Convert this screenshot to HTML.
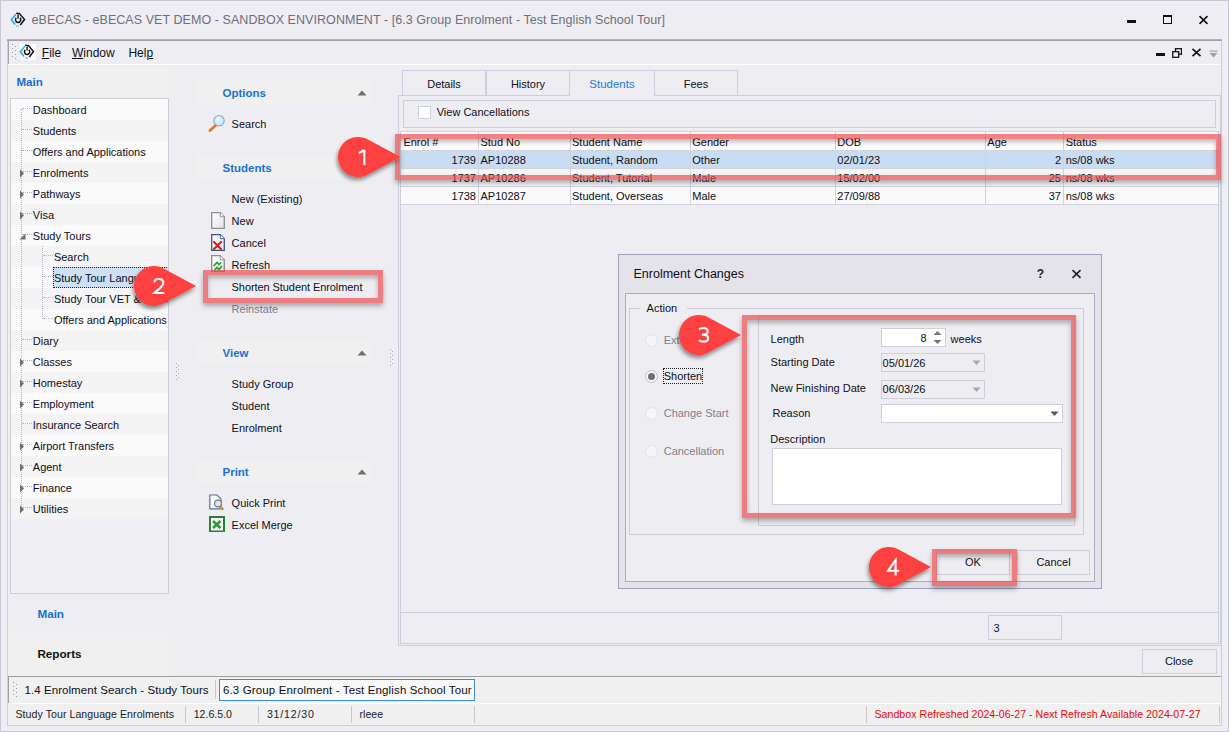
<!DOCTYPE html>
<html><head><meta charset="utf-8"><style>
html,body{margin:0;padding:0;}
body{width:1229px;height:732px;position:relative;overflow:hidden;font-family:"Liberation Sans",sans-serif;background:#eeeef2;}
body div{position:absolute;}
.t{white-space:nowrap;}
</style></head><body>
<div style="left:0px;top:0px;width:1229px;height:732px;background:#eeeef2;"></div>
<div style="left:0px;top:0px;width:1229px;height:1px;background:#c8c8d6;"></div>
<div style="left:0px;top:0px;width:1px;height:732px;background:#c8c8d6;"></div>
<div style="left:1228px;top:0px;width:1px;height:732px;background:#c8c8d6;"></div>
<div style="left:0px;top:731px;width:1229px;height:1px;background:#c8c8d6;"></div>
<svg style="position:absolute;left:8px;top:10px" width="22" height="20" viewBox="0 0 22 20"><path d="M7.9 4.1 L3.3 9.8 L7.1 14.5" fill="none" stroke="#1fa8ec" stroke-width="1.5"/><path d="M8 15.9 L11 16.2" stroke="#6cc8f4" stroke-width="1.3"/><path d="M8.2 3.3 L11.5 3.6 L16.5 9.5 L12.3 15" fill="none" stroke="#111" stroke-width="1.5"/><path d="M8.3 7.9 A2.6 2.6 0 1 0 11.9 7.9" fill="none" stroke="#111" stroke-width="1.5"/><path d="M10.1 4.5 L10.1 8.6" stroke="#111" stroke-width="1.4"/></svg>
<div class="t" style="left:31.5px;top:10.5px;font-size:12.5px;line-height:18px;color:#6e6e7c;font-weight:normal;letter-spacing:0.06px;">eBECAS - eBECAS VET DEMO - SANDBOX ENVIRONMENT - [6.3 Group Enrolment - Test English School Tour]</div>
<div style="left:1127px;top:20px;width:9px;height:3px;background:#111;"></div>
<div style="left:1163px;top:15px;width:9px;height:9px;border:1.2px solid #111;border-top-width:2px;box-sizing:border-box;"></div>
<svg style="position:absolute;left:1198px;top:15px" width="11" height="10" viewBox="0 0 11 10"><path d="M1.5 1.2 L9.5 8.8 M9.5 1.2 L1.5 8.8" stroke="#111" stroke-width="1.6"/></svg>
<div style="left:7px;top:40px;width:1px;height:686px;background:#cfcfdb;"></div>
<div style="left:1221px;top:40px;width:1px;height:686px;background:#cfcfdb;"></div>
<div style="left:7px;top:725px;width:1215px;height:1px;background:#cfcfdb;"></div>
<div style="left:8px;top:40px;width:1213px;height:24px;background:#eeeef2;"></div>
<div style="left:7px;top:39px;width:1215px;height:1px;background:#b4b4be;"></div>
<div style="left:7px;top:40px;width:1215px;height:1px;background:#a0a0aa;"></div>
<div style="left:8px;top:40px;width:1px;height:24px;background:#a4a4ae;"></div>
<div style="left:8px;top:64px;width:1213px;height:1px;background:#ffffff;"></div>
<svg style="position:absolute;left:11px;top:43px" width="7" height="18"><rect x="1" y="1" width="1" height="1" fill="#a0a0a0"/><rect x="4" y="3" width="1" height="1" fill="#a0a0a0"/><rect x="1" y="5" width="1" height="1" fill="#a0a0a0"/><rect x="4" y="7" width="1" height="1" fill="#a0a0a0"/><rect x="1" y="9" width="1" height="1" fill="#a0a0a0"/><rect x="4" y="11" width="1" height="1" fill="#a0a0a0"/><rect x="1" y="13" width="1" height="1" fill="#a0a0a0"/><rect x="4" y="15" width="1" height="1" fill="#a0a0a0"/></svg>
<div style="left:20px;top:44px;width:16px;height:16px;background:#fff;"></div>
<svg style="position:absolute;left:17px;top:42px" width="22" height="20" viewBox="0 0 22 20"><path d="M7.9 4.1 L3.3 9.8 L7.1 14.5" fill="none" stroke="#1fa8ec" stroke-width="1.5"/><path d="M8 15.9 L11 16.2" stroke="#6cc8f4" stroke-width="1.3"/><path d="M8.2 3.3 L11.5 3.6 L16.5 9.5 L12.3 15" fill="none" stroke="#111" stroke-width="1.5"/><path d="M8.3 7.9 A2.6 2.6 0 1 0 11.9 7.9" fill="none" stroke="#111" stroke-width="1.5"/><path d="M10.1 4.5 L10.1 8.6" stroke="#111" stroke-width="1.4"/></svg>
<div class="t" style="left:41.8px;top:44.8px;font-size:12px;line-height:16px;color:#0e0e18;font-weight:normal;"><u>F</u>ile</div>
<div class="t" style="left:72px;top:44.8px;font-size:12px;line-height:16px;color:#0e0e18;font-weight:normal;"><u>W</u>indow</div>
<div class="t" style="left:128.4px;top:44.8px;font-size:12px;line-height:16px;color:#0e0e18;font-weight:normal;">Hel<u>p</u></div>
<div style="left:1156px;top:53px;width:9px;height:3px;background:#111;"></div>
<svg style="position:absolute;left:1172px;top:48px" width="10" height="10" viewBox="0 0 10 10"><rect x="3.5" y="0.7" width="6" height="5.5" fill="none" stroke="#111" stroke-width="1.3"/><rect x="0.7" y="3.7" width="6" height="5.6" fill="#eeeef2" stroke="#111" stroke-width="1.3"/></svg>
<svg style="position:absolute;left:1191px;top:48px" width="11" height="9" viewBox="0 0 11 9"><path d="M1.5 0.8 L9.5 8.2 M9.5 0.8 L1.5 8.2" stroke="#111" stroke-width="1.6"/></svg>
<svg style="position:absolute;left:1209px;top:50px" width="9" height="8" viewBox="0 0 9 8"><rect x="0.5" y="0.5" width="8" height="1.2" fill="#a0a0a0"/><path d="M0.5 3 L8.5 3 L4.5 7.5 Z" fill="#a0a0a0"/></svg>
<div style="left:8px;top:65px;width:161px;height:568px;background:#f0f0f0;"></div>
<div style="left:8px;top:593px;width:161px;height:40px;background:#eeeef2;"></div>
<div class="t" style="left:16.4px;top:73.5px;font-size:11.6px;line-height:16px;color:#1570d0;font-weight:bold;">Main</div>
<div style="left:10px;top:98px;width:159px;height:496px;border:1px solid #cdcdd9;box-sizing:border-box;background:#f0f0f4;"></div>
<div style="left:11px;top:99px;width:157px;height:494px;overflow:hidden;">
<div style="left:0;top:0px;width:157px;height:21px;background:#fafafa;"></div>
<div style="left:0;top:21px;width:157px;height:21px;background:#f4f4f4;"></div>
<div style="left:0;top:42px;width:157px;height:21px;background:#fafafa;"></div>
<div style="left:0;top:63px;width:157px;height:21px;background:#f4f4f4;"></div>
<div style="left:0;top:84px;width:157px;height:21px;background:#fafafa;"></div>
<div style="left:0;top:105px;width:157px;height:21px;background:#f4f4f4;"></div>
<div style="left:0;top:126px;width:157px;height:21px;background:#fafafa;"></div>
<div style="left:0;top:147px;width:157px;height:21px;background:#f4f4f4;"></div>
<div style="left:0;top:168px;width:157px;height:21px;background:#fafafa;"></div>
<div style="left:0;top:189px;width:157px;height:21px;background:#f4f4f4;"></div>
<div style="left:0;top:210px;width:157px;height:21px;background:#fafafa;"></div>
<div style="left:0;top:231px;width:157px;height:21px;background:#f4f4f4;"></div>
<div style="left:0;top:252px;width:157px;height:21px;background:#fafafa;"></div>
<div style="left:0;top:273px;width:157px;height:21px;background:#f4f4f4;"></div>
<div style="left:0;top:294px;width:157px;height:21px;background:#fafafa;"></div>
<div style="left:0;top:315px;width:157px;height:21px;background:#f4f4f4;"></div>
<div style="left:0;top:336px;width:157px;height:21px;background:#fafafa;"></div>
<div style="left:0;top:357px;width:157px;height:21px;background:#f4f4f4;"></div>
<div style="left:0;top:378px;width:157px;height:21px;background:#fafafa;"></div>
<div style="left:0;top:399px;width:157px;height:21px;background:#f4f4f4;"></div>
</div>
<div style="left:21px;top:109px;width:0;height:400px;border-left:1px dotted #b4b4c4;"></div>
<div style="left:42px;top:246px;width:0;height:73px;border-left:1px dotted #b4b4c4;"></div>
<div style="left:0;top:0;width:168px;height:600px;overflow:hidden;">
<div style="left:22px;top:108px;width:10px;height:0;border-top:1px dotted #b4b4c4;"></div>
<div class="t" style="left:32.8px;top:102.0px;font-size:11px;line-height:16px;color:#0e0e18;font-weight:normal;white-space:nowrap;">Dashboard</div>
<div style="left:22px;top:129px;width:10px;height:0;border-top:1px dotted #b4b4c4;"></div>
<div class="t" style="left:32.8px;top:123.0px;font-size:11px;line-height:16px;color:#0e0e18;font-weight:normal;white-space:nowrap;">Students</div>
<div style="left:22px;top:150px;width:10px;height:0;border-top:1px dotted #b4b4c4;"></div>
<div class="t" style="left:32.8px;top:144.0px;font-size:11px;line-height:16px;color:#0e0e18;font-weight:normal;white-space:nowrap;">Offers and Applications</div>
<div style="left:22px;top:171px;width:10px;height:0;border-top:1px dotted #b4b4c4;"></div>
<svg style="position:absolute;left:19px;top:168.5px" width="6" height="9"><path d="M1 0.5 L5 4.5 L1 8.5 Z" fill="#6e6e6e"/></svg>
<div class="t" style="left:32.8px;top:165.0px;font-size:11px;line-height:16px;color:#0e0e18;font-weight:normal;white-space:nowrap;">Enrolments</div>
<div style="left:22px;top:192px;width:10px;height:0;border-top:1px dotted #b4b4c4;"></div>
<svg style="position:absolute;left:19px;top:189.5px" width="6" height="9"><path d="M1 0.5 L5 4.5 L1 8.5 Z" fill="#6e6e6e"/></svg>
<div class="t" style="left:32.8px;top:186.0px;font-size:11px;line-height:16px;color:#0e0e18;font-weight:normal;white-space:nowrap;">Pathways</div>
<div style="left:22px;top:213px;width:10px;height:0;border-top:1px dotted #b4b4c4;"></div>
<svg style="position:absolute;left:19px;top:210.5px" width="6" height="9"><path d="M1 0.5 L5 4.5 L1 8.5 Z" fill="#6e6e6e"/></svg>
<div class="t" style="left:32.8px;top:207.0px;font-size:11px;line-height:16px;color:#0e0e18;font-weight:normal;white-space:nowrap;">Visa</div>
<div style="left:22px;top:234px;width:10px;height:0;border-top:1px dotted #b4b4c4;"></div>
<svg style="position:absolute;left:19px;top:233px" width="7" height="7"><path d="M6.5 0.5 L6.5 6.5 L0.5 6.5 Z" fill="#6e6e6e"/></svg>
<div class="t" style="left:32.8px;top:228.0px;font-size:11px;line-height:16px;color:#0e0e18;font-weight:normal;white-space:nowrap;">Study Tours</div>
<div style="left:43px;top:255px;width:10px;height:0;border-top:1px dotted #b4b4c4;"></div>
<div class="t" style="left:53.9px;top:249.0px;font-size:11px;line-height:16px;color:#0e0e18;font-weight:normal;white-space:nowrap;">Search</div>
<div style="left:43px;top:276px;width:10px;height:0;border-top:1px dotted #b4b4c4;"></div>
<div style="left:53px;top:267px;width:116px;height:21px;background:#cce0f6;border:1px dotted #222;border-right:none;box-sizing:border-box;"></div>
<div class="t" style="left:53.9px;top:270.0px;font-size:11px;line-height:16px;color:#0e0e18;font-weight:normal;white-space:nowrap;">Study Tour Language Enrolments</div>
<div style="left:43px;top:297px;width:10px;height:0;border-top:1px dotted #b4b4c4;"></div>
<div class="t" style="left:53.9px;top:291.0px;font-size:11px;line-height:16px;color:#0e0e18;font-weight:normal;white-space:nowrap;">Study Tour VET &amp; Higher Ed</div>
<div style="left:43px;top:318px;width:10px;height:0;border-top:1px dotted #b4b4c4;"></div>
<div class="t" style="left:53.9px;top:312.0px;font-size:11px;line-height:16px;color:#0e0e18;font-weight:normal;white-space:nowrap;">Offers and Applications</div>
<div style="left:22px;top:339px;width:10px;height:0;border-top:1px dotted #b4b4c4;"></div>
<div class="t" style="left:32.8px;top:333.0px;font-size:11px;line-height:16px;color:#0e0e18;font-weight:normal;white-space:nowrap;">Diary</div>
<div style="left:22px;top:360px;width:10px;height:0;border-top:1px dotted #b4b4c4;"></div>
<svg style="position:absolute;left:19px;top:357.5px" width="6" height="9"><path d="M1 0.5 L5 4.5 L1 8.5 Z" fill="#6e6e6e"/></svg>
<div class="t" style="left:32.8px;top:354.0px;font-size:11px;line-height:16px;color:#0e0e18;font-weight:normal;white-space:nowrap;">Classes</div>
<div style="left:22px;top:381px;width:10px;height:0;border-top:1px dotted #b4b4c4;"></div>
<svg style="position:absolute;left:19px;top:378.5px" width="6" height="9"><path d="M1 0.5 L5 4.5 L1 8.5 Z" fill="#6e6e6e"/></svg>
<div class="t" style="left:32.8px;top:375.0px;font-size:11px;line-height:16px;color:#0e0e18;font-weight:normal;white-space:nowrap;">Homestay</div>
<div style="left:22px;top:402px;width:10px;height:0;border-top:1px dotted #b4b4c4;"></div>
<svg style="position:absolute;left:19px;top:399.5px" width="6" height="9"><path d="M1 0.5 L5 4.5 L1 8.5 Z" fill="#6e6e6e"/></svg>
<div class="t" style="left:32.8px;top:396.0px;font-size:11px;line-height:16px;color:#0e0e18;font-weight:normal;white-space:nowrap;">Employment</div>
<div style="left:22px;top:423px;width:10px;height:0;border-top:1px dotted #b4b4c4;"></div>
<div class="t" style="left:32.8px;top:417.0px;font-size:11px;line-height:16px;color:#0e0e18;font-weight:normal;white-space:nowrap;">Insurance Search</div>
<div style="left:22px;top:444px;width:10px;height:0;border-top:1px dotted #b4b4c4;"></div>
<svg style="position:absolute;left:19px;top:441.5px" width="6" height="9"><path d="M1 0.5 L5 4.5 L1 8.5 Z" fill="#6e6e6e"/></svg>
<div class="t" style="left:32.8px;top:438.0px;font-size:11px;line-height:16px;color:#0e0e18;font-weight:normal;white-space:nowrap;">Airport Transfers</div>
<div style="left:22px;top:465px;width:10px;height:0;border-top:1px dotted #b4b4c4;"></div>
<svg style="position:absolute;left:19px;top:462.5px" width="6" height="9"><path d="M1 0.5 L5 4.5 L1 8.5 Z" fill="#6e6e6e"/></svg>
<div class="t" style="left:32.8px;top:459.0px;font-size:11px;line-height:16px;color:#0e0e18;font-weight:normal;white-space:nowrap;">Agent</div>
<div style="left:22px;top:486px;width:10px;height:0;border-top:1px dotted #b4b4c4;"></div>
<svg style="position:absolute;left:19px;top:483.5px" width="6" height="9"><path d="M1 0.5 L5 4.5 L1 8.5 Z" fill="#6e6e6e"/></svg>
<div class="t" style="left:32.8px;top:480.0px;font-size:11px;line-height:16px;color:#0e0e18;font-weight:normal;white-space:nowrap;">Finance</div>
<div style="left:22px;top:507px;width:10px;height:0;border-top:1px dotted #b4b4c4;"></div>
<svg style="position:absolute;left:19px;top:504.5px" width="6" height="9"><path d="M1 0.5 L5 4.5 L1 8.5 Z" fill="#6e6e6e"/></svg>
<div class="t" style="left:32.8px;top:501.0px;font-size:11px;line-height:16px;color:#0e0e18;font-weight:normal;white-space:nowrap;">Utilities</div>
</div>
<svg style="position:absolute;left:175px;top:362px" width="6" height="18"><rect x="1" y="1" width="1" height="1" fill="#a8a8b0"/><rect x="3" y="3" width="1" height="1" fill="#a8a8b0"/><rect x="1" y="5" width="1" height="1" fill="#a8a8b0"/><rect x="3" y="7" width="1" height="1" fill="#a8a8b0"/><rect x="1" y="9" width="1" height="1" fill="#a8a8b0"/><rect x="3" y="11" width="1" height="1" fill="#a8a8b0"/><rect x="1" y="13" width="1" height="1" fill="#a8a8b0"/><rect x="3" y="15" width="1" height="1" fill="#a8a8b0"/><rect x="1" y="17" width="1" height="1" fill="#a8a8b0"/></svg>
<div class="t" style="left:37.4px;top:606.0px;font-size:11.7px;line-height:16px;color:#1a72cc;font-weight:bold;">Main</div>
<div style="left:8px;top:633px;width:161px;height:42px;background:#f0f0f0;"></div>
<div class="t" style="left:37.4px;top:646.0px;font-size:11.7px;line-height:16px;color:#101010;font-weight:bold;">Reports</div>
<div style="left:196px;top:81px;width:177px;height:23px;background:#f0f0f0;"></div>
<div class="t" style="left:222.5px;top:84.5px;font-size:11.5px;line-height:16px;color:#1a72cc;font-weight:bold;">Options</div>
<svg style="position:absolute;left:357px;top:89.5px" width="10" height="6"><path d="M0.5 5.5 L5 0.5 L9.5 5.5 Z" fill="#707070"/></svg>
<svg style="position:absolute;left:206px;top:113px" width="20" height="20" viewBox="0 0 20 20">
<path d="M9.5 12.5 L4 17.5" stroke="#d8801a" stroke-width="3" stroke-linecap="round"/>
<circle cx="13" cy="7.7" r="5.2" fill="#cfeefd" stroke="#8f9fd6" stroke-width="1.1"/>
<circle cx="12" cy="6.5" r="2" fill="#eefaff"/>
</svg>
<div class="t" style="left:231.6px;top:116.0px;font-size:11px;line-height:16px;color:#0e0e18;font-weight:normal;">Search</div>
<div style="left:196px;top:155px;width:177px;height:25px;background:#f0f0f0;"></div>
<div class="t" style="left:222.5px;top:159.5px;font-size:11.5px;line-height:16px;color:#1a72cc;font-weight:bold;">Students</div>
<div class="t" style="left:231.6px;top:190.6px;font-size:11px;line-height:16px;color:#0e0e18;font-weight:normal;">New (Existing)</div>
<div class="t" style="left:231.6px;top:213.0px;font-size:11px;line-height:16px;color:#0e0e18;font-weight:normal;">New</div>
<div class="t" style="left:231.6px;top:235.0px;font-size:11px;line-height:16px;color:#0e0e18;font-weight:normal;">Cancel</div>
<div class="t" style="left:231.6px;top:256.7px;font-size:11px;line-height:16px;color:#0e0e18;font-weight:normal;">Refresh</div>
<div class="t" style="left:231.6px;top:278.8px;font-size:11px;line-height:16px;color:#0e0e18;font-weight:normal;letter-spacing:-0.076px;">Shorten Student Enrolment</div>
<div class="t" style="left:231.6px;top:300.8px;font-size:11px;line-height:16px;color:#80808e;font-weight:normal;">Reinstate</div>
<svg style="position:absolute;left:211px;top:211.5px" width="14" height="17" viewBox="0 0 14 17">
<defs><linearGradient id="dg211.5" x1="0" y1="0" x2="1" y2="1"><stop offset="0" stop-color="#ffffff"/><stop offset="1" stop-color="#e2e2e8"/></linearGradient></defs>
<path d="M0.7 0.7 L9.3 0.7 L13.3 4.7 L13.3 16.3 L0.7 16.3 Z" fill="url(#dg211.5)" stroke="#8e8e8e" stroke-width="1.3"/>
<path d="M9.3 0.7 L9.3 4.7 L13.3 4.7" fill="#fff" stroke="#8e8e8e" stroke-width="0.9"/></svg>
<svg style="position:absolute;left:211px;top:233.5px" width="14" height="17" viewBox="0 0 14 17">
<defs><linearGradient id="dg233.5" x1="0" y1="0" x2="1" y2="1"><stop offset="0" stop-color="#ffffff"/><stop offset="1" stop-color="#e2e2e8"/></linearGradient></defs>
<path d="M0.7 0.7 L9.3 0.7 L13.3 4.7 L13.3 16.3 L0.7 16.3 Z" fill="url(#dg233.5)" stroke="#3e5488" stroke-width="1.3"/>
<path d="M9.3 0.7 L9.3 4.7 L13.3 4.7" fill="#fff" stroke="#3e5488" stroke-width="0.9"/><path d="M3 8 L10 15 M10 8 L3 15" stroke="#d42020" stroke-width="2.2" stroke-linecap="round"/></svg>
<svg style="position:absolute;left:211px;top:255px" width="14" height="17" viewBox="0 0 14 17">
<defs><linearGradient id="dg255" x1="0" y1="0" x2="1" y2="1"><stop offset="0" stop-color="#ffffff"/><stop offset="1" stop-color="#e2e2e8"/></linearGradient></defs>
<path d="M0.7 0.7 L9.3 0.7 L13.3 4.7 L13.3 16.3 L0.7 16.3 Z" fill="url(#dg255)" stroke="#8e8e8e" stroke-width="1.3"/>
<path d="M9.3 0.7 L9.3 4.7 L13.3 4.7" fill="#fff" stroke="#8e8e8e" stroke-width="0.9"/><path d="M2.5 11 L6 7.5 L8 9.5 L10 7.5" fill="none" stroke="#22a422" stroke-width="1.6"/><path d="M3.5 15 L6 12.5 L8 14.5 L11 11" fill="none" stroke="#22a422" stroke-width="1.6"/></svg>
<div style="left:196px;top:342px;width:177px;height:21px;background:#f0f0f0;"></div>
<div class="t" style="left:222.5px;top:344.5px;font-size:11.5px;line-height:16px;color:#1a72cc;font-weight:bold;">View</div>
<svg style="position:absolute;left:357px;top:349.5px" width="10" height="6"><path d="M0.5 5.5 L5 0.5 L9.5 5.5 Z" fill="#707070"/></svg>
<div class="t" style="left:231.6px;top:376.0px;font-size:11px;line-height:16px;color:#0e0e18;font-weight:normal;">Study Group</div>
<div class="t" style="left:231.6px;top:397.8px;font-size:11px;line-height:16px;color:#0e0e18;font-weight:normal;">Student</div>
<div class="t" style="left:231.6px;top:419.8px;font-size:11px;line-height:16px;color:#0e0e18;font-weight:normal;">Enrolment</div>
<div style="left:196px;top:461px;width:177px;height:22px;background:#f0f0f0;"></div>
<div class="t" style="left:222.5px;top:464.0px;font-size:11.5px;line-height:16px;color:#1a72cc;font-weight:bold;">Print</div>
<svg style="position:absolute;left:357px;top:469.0px" width="10" height="6"><path d="M0.5 5.5 L5 0.5 L9.5 5.5 Z" fill="#707070"/></svg>
<svg style="position:absolute;left:209px;top:494px" width="16" height="16" viewBox="0 0 16 16">
<path d="M0.8 1 L8 1 L12 5 L12 14.8 L0.8 14.8 Z" fill="#fbfbfd" stroke="#5a6f9e" stroke-width="1.2"/>
<path d="M10 11.5 L13.5 15" stroke="#e2901c" stroke-width="2.6" stroke-linecap="round"/>
<circle cx="9" cy="9.5" r="3.4" fill="#dde8f6" stroke="#7c7c84" stroke-width="1.2"/>
</svg>
<div class="t" style="left:231.6px;top:495.0px;font-size:11px;line-height:16px;color:#0e0e18;font-weight:normal;">Quick Print</div>
<svg style="position:absolute;left:209px;top:516px" width="16" height="16" viewBox="0 0 16 16">
<rect x="1" y="1" width="14" height="14.5" fill="#f4faf4" stroke="#2f7d38" stroke-width="2"/>
<path d="M4 5 L11.5 12 M11.5 5 L4 12" stroke="#2e9a3a" stroke-width="2.6"/></svg>
<div class="t" style="left:231.6px;top:517.0px;font-size:11px;line-height:16px;color:#0e0e18;font-weight:normal;">Excel Merge</div>
<svg style="position:absolute;left:389px;top:348px" width="7" height="18"><rect x="1" y="1" width="1" height="1" fill="#a8a8b0"/><rect x="3" y="3" width="1" height="1" fill="#a8a8b0"/><rect x="1" y="5" width="1" height="1" fill="#a8a8b0"/><rect x="3" y="7" width="1" height="1" fill="#a8a8b0"/><rect x="1" y="9" width="1" height="1" fill="#a8a8b0"/><rect x="3" y="11" width="1" height="1" fill="#a8a8b0"/><rect x="1" y="13" width="1" height="1" fill="#a8a8b0"/><rect x="3" y="15" width="1" height="1" fill="#a8a8b0"/><rect x="1" y="17" width="1" height="1" fill="#a8a8b0"/></svg>
<div style="left:402px;top:70px;width:84px;height:26px;border:1px solid #cccfdd;box-sizing:border-box;background:#eeeef2;"></div>
<div style="left:486px;top:70px;width:84px;height:26px;border:1px solid #cccfdd;box-sizing:border-box;background:#eeeef2;"></div>
<div style="left:570px;top:70px;width:84px;height:26px;border-top:1px solid #cccfdd;box-sizing:border-box;background:#eeeef2;"></div>
<div style="left:654px;top:70px;width:84px;height:26px;border:1px solid #cccfdd;box-sizing:border-box;background:#eeeef2;"></div>
<div style="left:398px;top:95px;width:823px;height:551px;border:1px solid #cccfdd;box-sizing:border-box;"></div>
<div style="left:570px;top:95px;width:84px;height:2px;background:#eeeef2;"></div>
<div class="t" style="left:402.0px;top:75.5px;width:84px;text-align:center;font-size:11px;line-height:16px;color:#0e0e18;font-weight:normal;">Details</div>
<div class="t" style="left:486.0px;top:75.5px;width:84px;text-align:center;font-size:11px;line-height:16px;color:#0e0e18;font-weight:normal;">History</div>
<div class="t" style="left:570.0px;top:76.0px;width:84px;text-align:center;font-size:11.5px;line-height:16px;color:#1e7ad0;font-weight:normal;">Students</div>
<div class="t" style="left:654.0px;top:75.5px;width:84px;text-align:center;font-size:11px;line-height:16px;color:#0e0e18;font-weight:normal;">Fees</div>
<div style="left:403px;top:100px;width:813px;height:28px;border:1px solid #cccfdd;box-sizing:border-box;"></div>
<div style="left:418px;top:106px;width:13px;height:13px;background:#fff;border:1px solid #cccfdd;box-sizing:border-box;"></div>
<div class="t" style="left:436.7px;top:104.0px;font-size:11px;line-height:16px;color:#0e0e18;font-weight:normal;">View Cancellations</div>
<div style="left:400px;top:131px;width:819px;height:513px;border:1px solid #cccfdd;box-sizing:border-box;"></div>
<div style="left:401px;top:132px;width:817px;height:18px;background:#fff;"></div>
<div style="left:401px;top:150px;width:817px;height:18px;background:#c8dcf2;"></div>
<div style="left:401px;top:168px;width:817px;height:18px;background:#f5f5f5;"></div>
<div style="left:401px;top:186px;width:817px;height:18px;background:#fafafa;"></div>
<div style="left:401px;top:204px;width:817px;height:1px;background:#d2d2de;"></div>
<div style="left:401px;top:150px;width:817px;height:1px;background:#d2d2de;"></div>
<div style="left:401px;top:168px;width:817px;height:1px;background:#d2d2de;"></div>
<div style="left:401px;top:186px;width:817px;height:1px;background:#d2d2de;"></div>
<div style="left:478px;top:132px;width:1px;height:72px;background:#d2d2de;"></div>
<div style="left:570px;top:132px;width:1px;height:72px;background:#d2d2de;"></div>
<div style="left:690px;top:132px;width:1px;height:72px;background:#d2d2de;"></div>
<div style="left:835px;top:132px;width:1px;height:72px;background:#d2d2de;"></div>
<div style="left:985px;top:132px;width:1px;height:72px;background:#d2d2de;"></div>
<div style="left:1063px;top:132px;width:1px;height:72px;background:#d2d2de;"></div>
<div class="t" style="left:403.4px;top:134.0px;font-size:11px;line-height:16px;color:#0e0e18;font-weight:normal;">Enrol #</div>
<div class="t" style="left:480.4px;top:134.0px;font-size:11px;line-height:16px;color:#0e0e18;font-weight:normal;">Stud No</div>
<div class="t" style="left:572px;top:134.0px;font-size:11px;line-height:16px;color:#0e0e18;font-weight:normal;">Student Name</div>
<div class="t" style="left:692.3px;top:134.0px;font-size:11px;line-height:16px;color:#0e0e18;font-weight:normal;">Gender</div>
<div class="t" style="left:837.3px;top:134.0px;font-size:11px;line-height:16px;color:#0e0e18;font-weight:normal;">DOB</div>
<div class="t" style="left:987.3px;top:134.0px;font-size:11px;line-height:16px;color:#0e0e18;font-weight:normal;">Age</div>
<div class="t" style="left:1065.7px;top:134.0px;font-size:11px;line-height:16px;color:#0e0e18;font-weight:normal;">Status</div>
<div class="t" style="left:406px;top:151.5px;width:70px;text-align:right;font-size:11px;line-height:16px;color:#0e0e18;font-weight:normal;">1739</div>
<div class="t" style="left:480.5px;top:151.5px;font-size:11px;line-height:16px;color:#0e0e18;font-weight:normal;">AP10288</div>
<div class="t" style="left:572px;top:151.5px;font-size:11px;line-height:16px;color:#0e0e18;font-weight:normal;">Student, Random</div>
<div class="t" style="left:692.3px;top:151.5px;font-size:11px;line-height:16px;color:#0e0e18;font-weight:normal;">Other</div>
<div class="t" style="left:837.3px;top:151.5px;font-size:11px;line-height:16px;color:#0e0e18;font-weight:normal;">02/01/23</div>
<div class="t" style="left:991px;top:151.5px;width:70px;text-align:right;font-size:11px;line-height:16px;color:#0e0e18;font-weight:normal;">2</div>
<div class="t" style="left:1065.7px;top:151.5px;font-size:11px;line-height:16px;color:#0e0e18;font-weight:normal;">ns/08 wks</div>
<div class="t" style="left:406px;top:169.5px;width:70px;text-align:right;font-size:11px;line-height:16px;color:#0e0e18;font-weight:normal;">1737</div>
<div class="t" style="left:480.5px;top:169.5px;font-size:11px;line-height:16px;color:#0e0e18;font-weight:normal;">AP10286</div>
<div class="t" style="left:572px;top:169.5px;font-size:11px;line-height:16px;color:#0e0e18;font-weight:normal;">Student, Tutorial</div>
<div class="t" style="left:692.3px;top:169.5px;font-size:11px;line-height:16px;color:#0e0e18;font-weight:normal;">Male</div>
<div class="t" style="left:837.3px;top:169.5px;font-size:11px;line-height:16px;color:#0e0e18;font-weight:normal;">15/02/00</div>
<div class="t" style="left:991px;top:169.5px;width:70px;text-align:right;font-size:11px;line-height:16px;color:#0e0e18;font-weight:normal;">25</div>
<div class="t" style="left:1065.7px;top:169.5px;font-size:11px;line-height:16px;color:#0e0e18;font-weight:normal;">ns/08 wks</div>
<div class="t" style="left:406px;top:187.5px;width:70px;text-align:right;font-size:11px;line-height:16px;color:#0e0e18;font-weight:normal;">1738</div>
<div class="t" style="left:480.5px;top:187.5px;font-size:11px;line-height:16px;color:#0e0e18;font-weight:normal;">AP10287</div>
<div class="t" style="left:572px;top:187.5px;font-size:11px;line-height:16px;color:#0e0e18;font-weight:normal;">Student, Overseas</div>
<div class="t" style="left:692.3px;top:187.5px;font-size:11px;line-height:16px;color:#0e0e18;font-weight:normal;">Male</div>
<div class="t" style="left:837.3px;top:187.5px;font-size:11px;line-height:16px;color:#0e0e18;font-weight:normal;">27/09/88</div>
<div class="t" style="left:991px;top:187.5px;width:70px;text-align:right;font-size:11px;line-height:16px;color:#0e0e18;font-weight:normal;">37</div>
<div class="t" style="left:1065.7px;top:187.5px;font-size:11px;line-height:16px;color:#0e0e18;font-weight:normal;">ns/08 wks</div>
<div style="left:401px;top:612px;width:817px;height:1px;background:#cccfdd;"></div>
<div style="left:988px;top:615px;width:74px;height:25px;border:1px solid #cccfdd;box-sizing:border-box;"></div>
<div class="t" style="left:993.4px;top:619.8px;font-size:11px;line-height:16px;color:#0e0e18;font-weight:normal;">3</div>
<div style="left:1142px;top:649px;width:75px;height:25px;border:1px solid #cccfdd;box-sizing:border-box;"></div>
<div class="t" style="left:1141.5px;top:652.7px;width:75px;text-align:center;font-size:11px;line-height:16px;color:#0e0e18;font-weight:normal;">Close</div>
<div style="left:8px;top:676px;width:1213px;height:28px;background:#f0f0f0;"></div>
<div style="left:8px;top:676px;width:1213px;height:1px;background:#a0a0a0;"></div>
<div style="left:8px;top:676px;width:1px;height:27px;background:#a0a0a0;"></div>
<div style="left:8px;top:703px;width:1213px;height:1px;background:#ffffff;"></div>
<svg style="position:absolute;left:12px;top:681px" width="6" height="18"><rect x="1" y="1" width="1" height="1" fill="#9a9a9a"/><rect x="4" y="3" width="1" height="1" fill="#9a9a9a"/><rect x="1" y="5" width="1" height="1" fill="#9a9a9a"/><rect x="4" y="7" width="1" height="1" fill="#9a9a9a"/><rect x="1" y="9" width="1" height="1" fill="#9a9a9a"/><rect x="4" y="11" width="1" height="1" fill="#9a9a9a"/><rect x="1" y="13" width="1" height="1" fill="#9a9a9a"/><rect x="4" y="15" width="1" height="1" fill="#9a9a9a"/></svg>
<div class="t" style="left:24.5px;top:681.5px;font-size:11.5px;line-height:16px;color:#0e0e18;font-weight:normal;letter-spacing:0.065px;">1.4 Enrolment Search - Study Tours</div>
<div style="left:215px;top:680px;width:1px;height:19px;background:#c8c8c8;"></div>
<div style="left:219px;top:679px;width:256px;height:22px;border:1px solid #3b8ad8;box-sizing:border-box;background:#f8f8f8;"></div>
<div class="t" style="left:223px;top:681.5px;font-size:11.5px;line-height:16px;color:#0e0e18;font-weight:normal;letter-spacing:0.137px;">6.3 Group Enrolment - Test English School Tour</div>
<div style="left:8px;top:704px;width:1213px;height:21px;background:#f0f0f0;"></div>
<div style="left:185px;top:706px;width:1px;height:17px;background:#c8c8c8;"></div>
<div style="left:258px;top:706px;width:1px;height:17px;background:#c8c8c8;"></div>
<div style="left:351px;top:706px;width:1px;height:17px;background:#c8c8c8;"></div>
<div style="left:474px;top:706px;width:1px;height:17px;background:#c8c8c8;"></div>
<div style="left:866px;top:706px;width:1px;height:17px;background:#c8c8c8;"></div>
<div style="left:1219px;top:706px;width:1px;height:17px;background:#c8c8c8;"></div>
<div class="t" style="left:15.5px;top:705.6px;font-size:10.6px;line-height:16px;color:#222;font-weight:normal;letter-spacing:0.051px;">Study Tour Language Enrolments</div>
<div class="t" style="left:193.7px;top:705.6px;font-size:10.6px;line-height:16px;color:#222;font-weight:normal;">12.6.5.0</div>
<div class="t" style="left:266.9px;top:705.6px;font-size:10.6px;line-height:16px;color:#222;font-weight:normal;letter-spacing:0.826px;">31/12/30</div>
<div class="t" style="left:359.6px;top:705.6px;font-size:10.6px;line-height:16px;color:#222;font-weight:normal;">rleee</div>
<div class="t" style="left:874.5px;top:705.6px;font-size:10.6px;line-height:16px;color:#e80808;font-weight:normal;letter-spacing:0.028px;">Sandbox Refreshed 2024-06-27 - Next Refresh Available 2024-07-27</div>
<div style="left:618px;top:254px;width:484px;height:335px;background:#e3e3e9;border:1px solid #9ea3c2;box-sizing:border-box;"></div>
<div class="t" style="left:633.5px;top:264.5px;font-size:12.5px;line-height:18px;color:#0e0e18;font-weight:normal;">Enrolment Changes</div>
<div class="t" style="left:1034.5px;top:265.5px;width:12px;text-align:center;font-size:12px;line-height:16px;color:#222;font-weight:bold;">?</div>
<svg style="position:absolute;left:1071px;top:269px" width="11" height="10" viewBox="0 0 11 10"><path d="M1.5 1.2 L9.5 8.8 M9.5 1.2 L1.5 8.8" stroke="#222" stroke-width="1.6"/></svg>
<div style="left:625px;top:293px;width:470px;height:289px;background:#eeeef2;border:1px solid #a8adc8;box-sizing:border-box;"></div>
<div style="left:629px;top:308px;width:455px;height:227px;border:1px solid #ccceda;box-sizing:border-box;"></div>
<div style="left:640px;top:300px;width:47px;height:14px;background:#eeeef2;"></div>
<div class="t" style="left:646.6px;top:300.0px;font-size:11px;line-height:16px;color:#0e0e18;font-weight:normal;">Action</div>
<div style="left:645px;top:333.5px;width:13px;height:13px;border-radius:50%;background:#f6f6f8;border:1px solid #e0e0e6;box-sizing:border-box;"></div>
<div class="t" style="left:663.7px;top:331.5px;font-size:11px;line-height:16px;color:#80808e;font-weight:normal;">Extend</div>
<div style="left:645px;top:369.7px;width:13px;height:13px;border-radius:50%;background:#f6f6f8;border:1px solid #c0c0c8;box-sizing:border-box;"></div>
<div style="left:648px;top:372.7px;width:7px;height:7px;border-radius:50%;background:#707070;"></div>
<div class="t" style="left:663.7px;top:367.7px;font-size:11px;line-height:16px;color:#0e0e18;font-weight:normal;">Shorten</div>
<div style="left:663px;top:368px;width:40px;height:16px;border:1px dotted #222;box-sizing:border-box;"></div>
<div style="left:645px;top:407.2px;width:13px;height:13px;border-radius:50%;background:#f6f6f8;border:1px solid #e0e0e6;box-sizing:border-box;"></div>
<div class="t" style="left:663.7px;top:405.2px;font-size:11px;line-height:16px;color:#80808e;font-weight:normal;">Change Start</div>
<div style="left:645px;top:444.7px;width:13px;height:13px;border-radius:50%;background:#f6f6f8;border:1px solid #e0e0e6;box-sizing:border-box;"></div>
<div class="t" style="left:663.7px;top:442.7px;font-size:11px;line-height:16px;color:#80808e;font-weight:normal;">Cancellation</div>
<div style="left:758px;top:316px;width:317px;height:210px;border:1px solid #ccceda;box-sizing:border-box;"></div>
<div class="t" style="left:770.6px;top:331.0px;font-size:11px;line-height:16px;color:#0e0e18;font-weight:normal;">Length</div>
<div class="t" style="left:770.6px;top:354.3px;font-size:11px;line-height:16px;color:#0e0e18;font-weight:normal;">Starting Date</div>
<div class="t" style="left:770.6px;top:379.5px;font-size:11px;line-height:16px;color:#0e0e18;font-weight:normal;">New Finishing Date</div>
<div class="t" style="left:772.5px;top:404.8px;font-size:11px;line-height:16px;color:#0e0e18;font-weight:normal;">Reason</div>
<div class="t" style="left:770.3px;top:431.3px;font-size:11px;line-height:16px;color:#0e0e18;font-weight:normal;">Description</div>
<div style="left:881px;top:328px;width:65px;height:19px;background:#fff;border:1px solid #ccceda;box-sizing:border-box;"></div>
<div class="t" style="left:906.5px;top:329.5px;width:20px;text-align:right;font-size:11px;line-height:16px;color:#0e0e18;font-weight:normal;">8</div>
<svg style="position:absolute;left:933px;top:330px" width="9" height="15"><path d="M0.5 5 L4.5 1 L8.5 5 Z" fill="#777"/><path d="M0.5 10 L4.5 14 L8.5 10 Z" fill="#777"/></svg>
<div class="t" style="left:950.6px;top:330.5px;font-size:11px;line-height:16px;color:#0e0e18;font-weight:normal;">weeks</div>
<div style="left:881px;top:353px;width:104px;height:19px;border:1px solid #ccceda;box-sizing:border-box;"></div>
<div class="t" style="left:882.6px;top:354.5px;font-size:11px;line-height:16px;color:#0e0e18;font-weight:normal;">05/01/26</div>
<svg style="position:absolute;left:972px;top:360px" width="9" height="6"><path d="M0.5 0.5 L8.5 0.5 L4.5 5 Z" fill="#a8a8a8"/></svg>
<div style="left:881px;top:379.5px;width:104px;height:19px;border:1px solid #ccceda;box-sizing:border-box;"></div>
<div class="t" style="left:882.6px;top:381.0px;font-size:11px;line-height:16px;color:#0e0e18;font-weight:normal;">06/03/26</div>
<svg style="position:absolute;left:972px;top:386.5px" width="9" height="6"><path d="M0.5 0.5 L8.5 0.5 L4.5 5 Z" fill="#a8a8a8"/></svg>
<div style="left:881px;top:404px;width:182px;height:19px;background:#fff;border:1px solid #ccceda;box-sizing:border-box;"></div>
<svg style="position:absolute;left:1050px;top:411px" width="9" height="6"><path d="M0.5 0.5 L8.5 0.5 L4.5 5 Z" fill="#555"/></svg>
<div style="left:772px;top:448px;width:290px;height:57px;background:#fff;border:1px solid #ccceda;box-sizing:border-box;"></div>
<div style="left:936px;top:550px;width:74px;height:25px;border:1px solid #ccceda;box-sizing:border-box;"></div>
<div class="t" style="left:936.0px;top:554.0px;width:74px;text-align:center;font-size:11px;line-height:16px;color:#0e0e18;font-weight:normal;">OK</div>
<div style="left:1017px;top:550px;width:73px;height:25px;border:1px solid #ccceda;box-sizing:border-box;"></div>
<div class="t" style="left:1017.0px;top:554.0px;width:73px;text-align:center;font-size:11px;line-height:16px;color:#0e0e18;font-weight:normal;">Cancel</div>
<div style="left:395px;top:134px;width:826px;height:46px;border:5px solid rgba(234,72,76,0.68);box-sizing:border-box;box-shadow:0 3px 5px rgba(0,0,0,0.3), inset 0 3px 5px rgba(0,0,0,0.28);"></div>
<div style="left:203px;top:270px;width:180px;height:33px;border:5px solid rgba(234,72,76,0.68);box-sizing:border-box;box-shadow:0 3px 5px rgba(0,0,0,0.3), inset 0 3px 5px rgba(0,0,0,0.28);"></div>
<div style="left:742px;top:315px;width:334px;height:203px;border:5px solid rgba(234,72,76,0.68);box-sizing:border-box;box-shadow:0 3px 5px rgba(0,0,0,0.3), inset 0 3px 5px rgba(0,0,0,0.28);"></div>
<div style="left:932px;top:549px;width:85px;height:37px;border:5px solid rgba(234,72,76,0.68);box-sizing:border-box;box-shadow:0 3px 5px rgba(0,0,0,0.3), inset 0 3px 5px rgba(0,0,0,0.28);"></div>
<svg style="position:absolute;left:332.5px;top:130px;overflow:visible" width="80" height="60"><defs><filter id="sh1" x="-30%" y="-30%" width="160%" height="170%"><feGaussianBlur in="SourceAlpha" stdDeviation="2.2"/><feOffset dx="-1" dy="3"/><feComponentTransfer><feFuncA type="linear" slope="0.45"/></feComponentTransfer><feMerge><feMergeNode/><feMergeNode in="SourceGraphic"/></feMerge></filter></defs><path d="M34.41 9.35 L67.50 27.00 L34.41 44.65 A20 20 0 1 1 34.41 9.35 Z" fill="#fd4040" filter="url(#sh1)"/></svg>
<svg style="position:absolute;left:357.9px;top:149px;overflow:visible" width="7.5" height="16"><path d="M0.9 4.2 L6.3 1 M6.3 0.8 L6.3 16" fill="none" stroke="#fff" stroke-width="2.1" stroke-linejoin="miter"/></svg>
<svg style="position:absolute;left:129px;top:259px;overflow:visible" width="80" height="60"><defs><filter id="sh2" x="-30%" y="-30%" width="160%" height="170%"><feGaussianBlur in="SourceAlpha" stdDeviation="2.2"/><feOffset dx="-1" dy="3"/><feComponentTransfer><feFuncA type="linear" slope="0.45"/></feComponentTransfer><feMerge><feMergeNode/><feMergeNode in="SourceGraphic"/></feMerge></filter></defs><path d="M34.52 9.41 L67.00 27.00 L34.52 44.59 A20 20 0 1 1 34.52 9.41 Z" fill="#fd4040" filter="url(#sh2)"/></svg>
<svg style="position:absolute;left:152.8px;top:278px;overflow:visible" width="11.6" height="16"><path d="M1.3 4.3 C1.6 2 3.4 1 5.8 1 C8.6 1 10.3 2.6 10.3 4.8 C10.3 7 8.9 8.5 6.5 10.6 L1.3 15 L11.2 15" fill="none" stroke="#fff" stroke-width="2.1" stroke-linejoin="miter"/></svg>
<svg style="position:absolute;left:674px;top:308px;overflow:visible" width="80" height="60"><defs><filter id="sh3" x="-30%" y="-30%" width="160%" height="170%"><feGaussianBlur in="SourceAlpha" stdDeviation="2.2"/><feOffset dx="-1" dy="3"/><feComponentTransfer><feFuncA type="linear" slope="0.45"/></feComponentTransfer><feMerge><feMergeNode/><feMergeNode in="SourceGraphic"/></feMerge></filter></defs><path d="M34.52 9.41 L67.00 27.00 L34.52 44.59 A20 20 0 1 1 34.52 9.41 Z" fill="#fd4040" filter="url(#sh3)"/></svg>
<svg style="position:absolute;left:698px;top:327.2px;overflow:visible" width="11" height="15.5"><path d="M1.2 2.2 C2.2 1.3 3.7 1 5.4 1 C8.1 1 9.7 2.4 9.7 4.3 C9.7 6.4 7.9 7.6 5.1 7.6 L3.9 7.6 M5.1 7.6 C8.4 7.6 10.1 9.2 10.1 11.2 C10.1 13.4 8.2 14.6 5.4 14.6 C3.5 14.6 1.9 14.1 0.9 13.3" fill="none" stroke="#fff" stroke-width="2.1" stroke-linejoin="miter"/></svg>
<svg style="position:absolute;left:864px;top:540px;overflow:visible" width="80" height="60"><defs><filter id="sh4" x="-30%" y="-30%" width="160%" height="170%"><feGaussianBlur in="SourceAlpha" stdDeviation="2.2"/><feOffset dx="-1" dy="3"/><feComponentTransfer><feFuncA type="linear" slope="0.45"/></feComponentTransfer><feMerge><feMergeNode/><feMergeNode in="SourceGraphic"/></feMerge></filter></defs><path d="M34.52 9.41 L67.00 27.00 L34.52 44.59 A20 20 0 1 1 34.52 9.41 Z" fill="#fd4040" filter="url(#sh4)"/></svg>
<svg style="position:absolute;left:887px;top:558.7px;overflow:visible" width="12.4" height="16.6"><path d="M8.6 16.6 L8.6 1 L1 11.8 L12.2 11.8" fill="none" stroke="#fff" stroke-width="2.1" stroke-linejoin="miter"/></svg>
</body></html>
